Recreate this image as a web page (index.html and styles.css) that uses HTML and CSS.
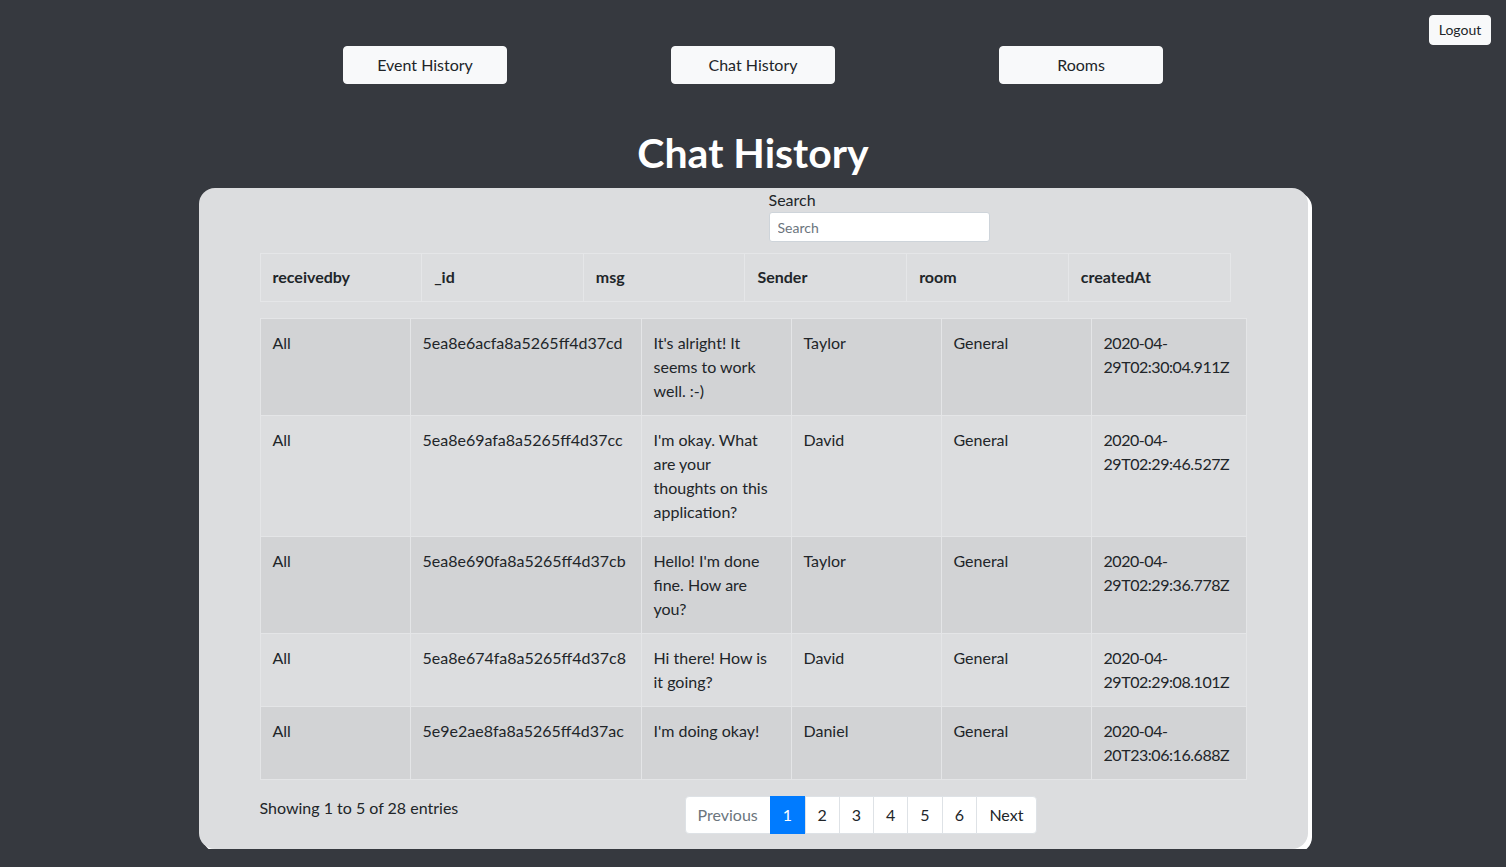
FILE: index.html
```html
<!DOCTYPE html>
<html lang="en">
<head>
<meta charset="utf-8">
<title>Chat History</title>
<link rel="stylesheet" href="styles.css">
</head>
<body>
  <div class="topbar">
    <button class="btn btn-logout">Logout</button>
  </div>
  <nav class="nav">
    <div class="nav-col"><button class="btn btn-nav">Event History</button></div>
    <div class="nav-col"><button class="btn btn-nav">Chat History</button></div>
    <div class="nav-col"><button class="btn btn-nav">Rooms</button></div>
  </nav>
  <h1 class="title">Chat History</h1>
  <main class="card">
    <div class="search">
      <label class="search-label" for="q">Search</label>
      <input id="q" class="search-input" type="text" placeholder="Search">
    </div>
    <table class="thead-table">
      <tr>
        <th>receivedby</th>
        <th>_id</th>
        <th>msg</th>
        <th>Sender</th>
        <th>room</th>
        <th>createdAt</th>
      </tr>
    </table>
    <table class="data-table">
      <colgroup>
        <col class="c1"><col class="c2"><col class="c3"><col class="c4"><col class="c5"><col class="c6">
      </colgroup>
      <tbody>
        <tr class="odd">
          <td>All</td><td>5ea8e6acfa8a5265ff4d37cd</td><td>It's alright! It seems to work well. :-)</td><td>Taylor</td><td>General</td><td class="ts">2020-04-29T02:30:04.911Z</td>
        </tr>
        <tr class="even">
          <td>All</td><td>5ea8e69afa8a5265ff4d37cc</td><td class="msg-tight">I'm okay. What are your thoughts on this application?</td><td>David</td><td>General</td><td class="ts">2020-04-29T02:29:46.527Z</td>
        </tr>
        <tr class="odd">
          <td>All</td><td>5ea8e690fa8a5265ff4d37cb</td><td>Hello! I'm done fine. How are you?</td><td>Taylor</td><td>General</td><td class="ts">2020-04-29T02:29:36.778Z</td>
        </tr>
        <tr class="even">
          <td>All</td><td>5ea8e674fa8a5265ff4d37c8</td><td>Hi there! How is it going?</td><td>David</td><td>General</td><td class="ts">2020-04-29T02:29:08.101Z</td>
        </tr>
        <tr class="odd">
          <td>All</td><td>5e9e2ae8fa8a5265ff4d37ac</td><td>I'm doing okay!</td><td>Daniel</td><td>General</td><td class="ts">2020-04-20T23:06:16.688Z</td>
        </tr>
      </tbody>
    </table>
    <div class="footer">
      <div class="info">Showing 1 to 5 of 28 entries</div>
      <ul class="pagination">
        <li class="page prev">Previous</li>
        <li class="page active">1</li>
        <li class="page">2</li>
        <li class="page">3</li>
        <li class="page">4</li>
        <li class="page">5</li>
        <li class="page">6</li>
        <li class="page next">Next</li>
      </ul>
    </div>
  </main>
</body>
</html>
```
FILE: styles.css
```css
* { box-sizing: border-box; }

body {
  margin: 0;
  background: #36393f;
  font-family: "Lato", "Open Sans", "Liberation Sans", sans-serif;
  font-size: 16px;
  line-height: 1.5;
  color: #212529;
}

.btn {
  font-family: inherit;
  background: #f8f9fa;
  color: #212529;
  border: 1px solid #f8f9fa;
  border-radius: 4px;
  cursor: pointer;
}

.topbar {
  display: flex;
  justify-content: flex-end;
  padding: 15px 15px 0 0;
  height: 46px;
}

.btn-logout {
  font-size: 14px;
  height: 30px;
  width: 62px;
  padding: 0 0 2px;
}

.nav {
  display: grid;
  grid-template-columns: repeat(3, 328px);
  justify-content: center;
}

.nav-col {
  display: flex;
  justify-content: center;
}

.btn-nav {
  width: 164px;
  height: 38px;
  font-size: 16px;
  padding: 0 0 2px;
}

.title {
  margin: 45px 0 11px;
  text-align: center;
  color: #fff;
  font-size: 41px;
  font-weight: 700;
  line-height: 48px;
}

.card {
  width: 1109px;
  height: 661px;
  margin: 0 auto;
  background: #dcdddf;
  border-radius: 16px;
  box-shadow: 4px 4px 0 #fff;
  padding: 0 0 0 61px;
}

.search {
  margin-left: 509px;
  width: 221px;
}

.search-label {
  display: block;
  font-size: 16px;
  line-height: 24px;
}

.search-input {
  display: block;
  width: 221px;
  height: 30px;
  padding: 4px 8px;
  font-family: inherit;
  font-size: 14px;
  color: #495057;
  background: #fff;
  border: 1px solid #ced4da;
  border-radius: 3px;
}

.search-input::placeholder { color: #6c757d; }

.thead-table {
  margin-top: 11px;
  width: 971px;
  border-collapse: collapse;
  table-layout: fixed;
}

.thead-table th {
  text-align: left;
  font-weight: 700;
  padding: 11px 12px 12px;
  line-height: 24px;
  border: 1px solid #e5e6e8;
}

.data-table {
  margin-top: 16px;
  width: 986px;
  border-collapse: collapse;
  table-layout: fixed;
}

.c1 { width: 150px; }
.c2 { width: 231px; }
.c3 { width: 150px; }
.c4 { width: 150px; }
.c5 { width: 150px; }
.c6 { width: 155px; }

.data-table td {
  vertical-align: top;
  padding: 12px;
  line-height: 24px;
  border: 1px solid #e4e5e7;
  word-wrap: break-word;
}

.data-table td.msg-tight {
  padding-right: 22px;
}

.data-table td.ts {
  letter-spacing: -0.45px;
}

.data-table tr.odd td { background: #d2d3d5; }
.data-table tr.even td { background: #dcdddf; }

.footer {
  display: flex;
  align-items: flex-start;
  margin-top: 16px;
}

.info {
  width: 425px;
  line-height: 24px;
}

.pagination {
  display: flex;
  list-style: none;
  margin: 0;
  padding: 0;
}

.page {
  height: 38px;
  min-width: 34px;
  padding: 0 12px;
  line-height: 36px;
  text-align: center;
  background: #fff;
  color: #212529;
  border: 1px solid #dee2e6;
  margin-left: -1px;
}

.page.prev {
  margin-left: 0;
  color: #6c757d;
  border-radius: 4px 0 0 4px;
  width: 86px;
}

.page.active {
  background: #007bff;
  border-color: #007bff;
  color: #fff;
  width: 36px;
}

.page.next {
  border-radius: 0 4px 4px 0;
  width: 61px;
}
```
